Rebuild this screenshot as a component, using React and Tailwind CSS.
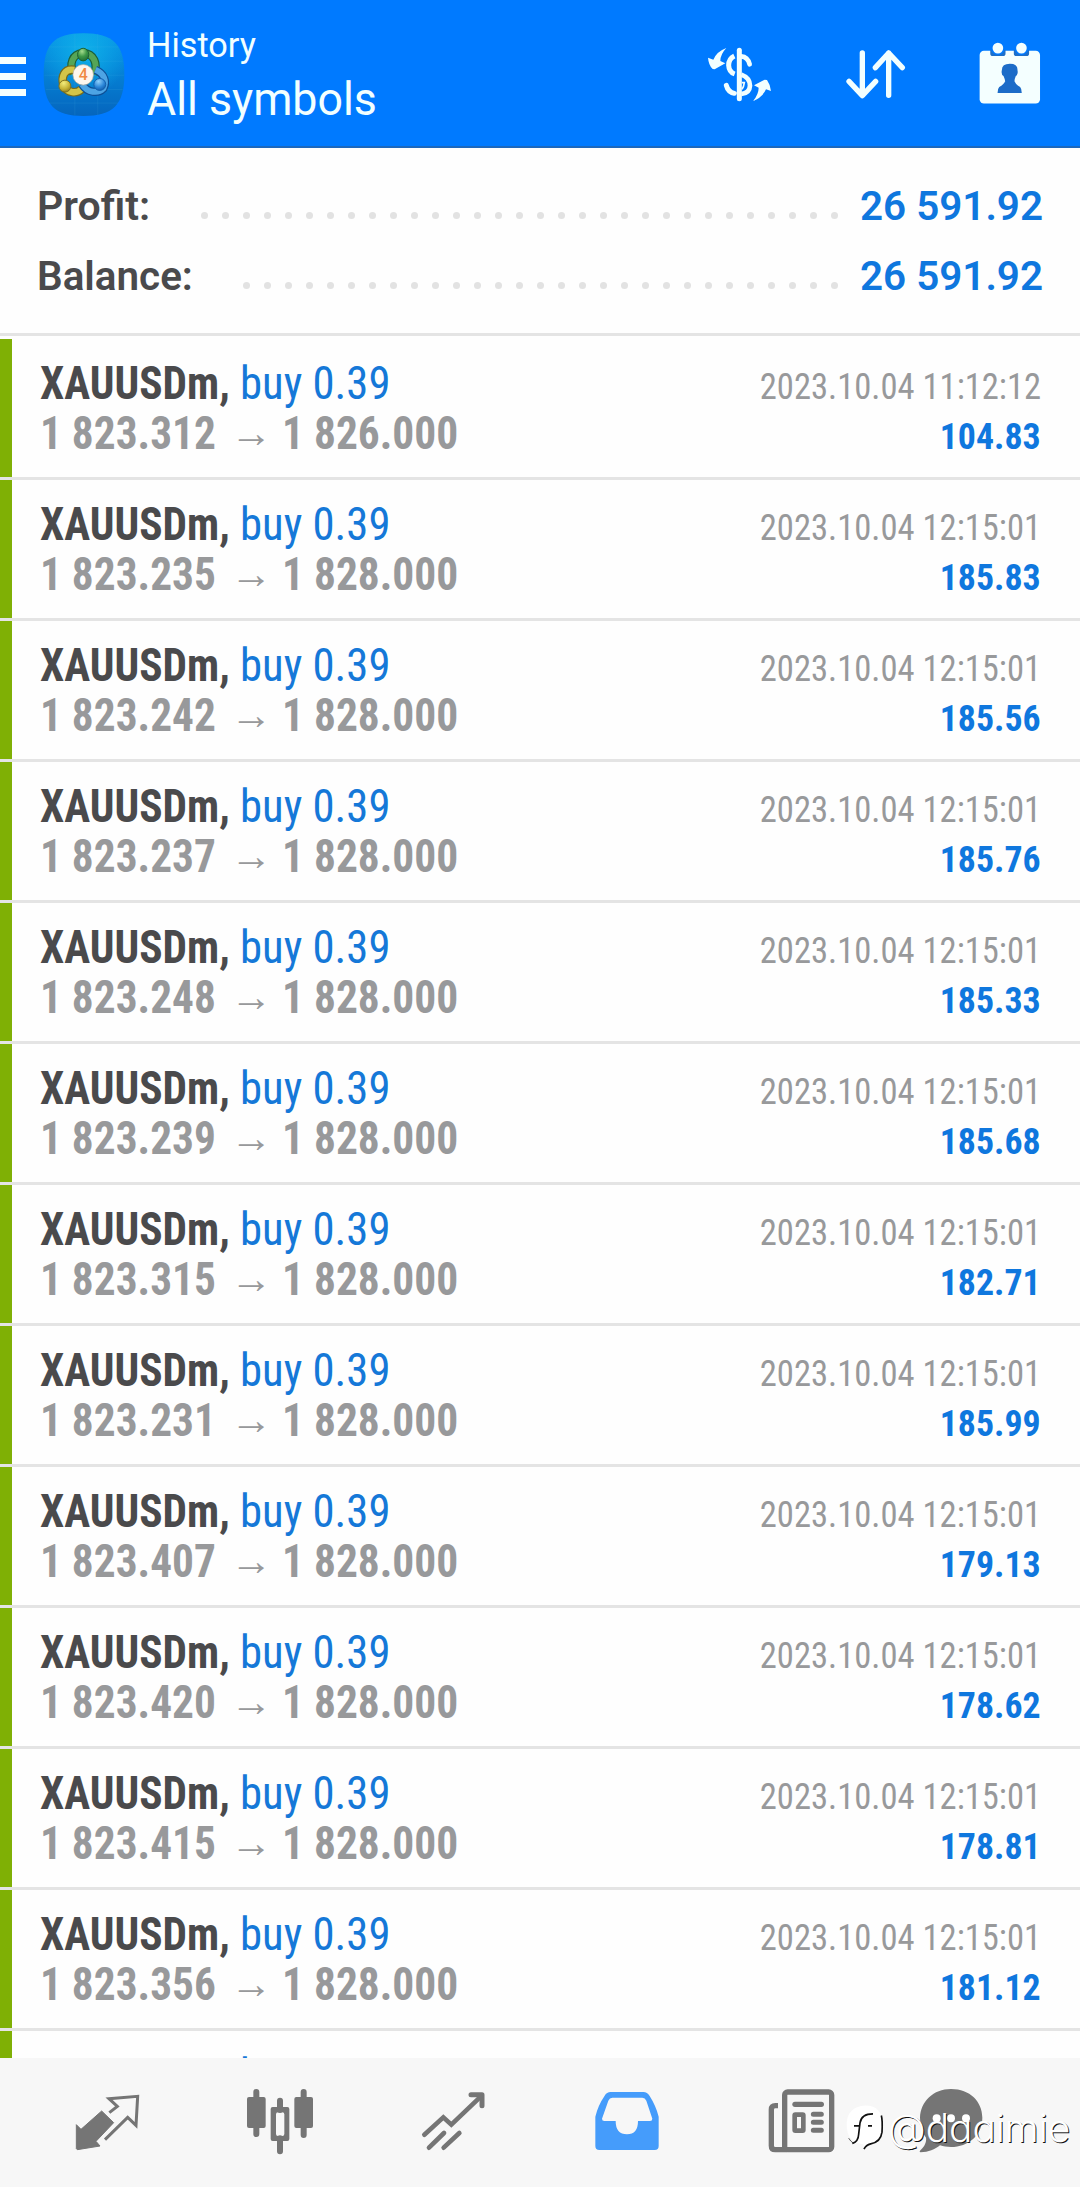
import React from "react";

const deals = [
  ["1 823.312", "1 826.000", "2023.10.04 11:12:12", "104.83"],
  ["1 823.235", "1 828.000", "2023.10.04 12:15:01", "185.83"],
  ["1 823.242", "1 828.000", "2023.10.04 12:15:01", "185.56"],
  ["1 823.237", "1 828.000", "2023.10.04 12:15:01", "185.76"],
  ["1 823.248", "1 828.000", "2023.10.04 12:15:01", "185.33"],
  ["1 823.239", "1 828.000", "2023.10.04 12:15:01", "185.68"],
  ["1 823.315", "1 828.000", "2023.10.04 12:15:01", "182.71"],
  ["1 823.231", "1 828.000", "2023.10.04 12:15:01", "185.99"],
  ["1 823.407", "1 828.000", "2023.10.04 12:15:01", "179.13"],
  ["1 823.420", "1 828.000", "2023.10.04 12:15:01", "178.62"],
  ["1 823.415", "1 828.000", "2023.10.04 12:15:01", "178.81"],
  ["1 823.356", "1 828.000", "2023.10.04 12:15:01", "181.12"],
];

function AppLogo() {
  return (
    <svg viewBox="40 34 250 256" className="h-[85px] w-[83px]">
      <defs>
        <linearGradient id="sky" x1="0" y1="0" x2="0" y2="1">
          <stop offset="0" stopColor="#0796e6" />
          <stop offset="0.4" stopColor="#0585d8" />
          <stop offset="1" stopColor="#0565bd" />
        </linearGradient>
        <radialGradient id="glow" cx="0.5" cy="0.22" r="0.55">
          <stop offset="0" stopColor="#10b4ea" stopOpacity="0.9" />
          <stop offset="1" stopColor="#10b4ea" stopOpacity="0" />
        </radialGradient>
        <radialGradient id="green" cx="0.4" cy="0.25" r="0.8">
          <stop offset="0" stopColor="#a5dc8d" />
          <stop offset="0.5" stopColor="#3f9a48" />
          <stop offset="1" stopColor="#1c6b35" />
        </radialGradient>
        <radialGradient id="gold" cx="0.4" cy="0.25" r="0.8">
          <stop offset="0" stopColor="#f3ec7c" />
          <stop offset="0.6" stopColor="#c7b437" />
          <stop offset="1" stopColor="#8e7c1c" />
        </radialGradient>
        <radialGradient id="azure" cx="0.4" cy="0.25" r="0.8">
          <stop offset="0" stopColor="#8fd0fb" />
          <stop offset="0.6" stopColor="#2b86d8" />
          <stop offset="1" stopColor="#0e58a8" />
        </radialGradient>
      </defs>
      <path d="M162 38C250 38 285 70 285 162S250 287 162 287 42 254 42 162 74 38 162 38Z" fill="url(#sky)" />
      <path d="M162 38C250 38 285 70 285 162S250 287 162 287 42 254 42 162 74 38 162 38Z" fill="url(#glow)" />
      <path d="M58 79H268M46 122H280M44 164H284M48 207H280M60 248H266M136 40V285M205 40V284" stroke="#5cc0f0" strokeOpacity="0.18" strokeWidth="2" />
      <path d="M132 160C118 130 128 100 160 97 194 98 206 130 194 162" fill="none" stroke="#1d5f36" strokeWidth="25" />
      <path d="M132 160C118 130 128 100 160 97 194 98 206 130 194 162" fill="none" stroke="#55a556" strokeWidth="18" />
      <path d="M134 148C104 142 94 170 102 194 114 220 142 220 156 206" fill="none" stroke="#756b1c" strokeWidth="26" />
      <path d="M134 148C104 142 94 170 102 194 114 220 142 220 156 206" fill="none" stroke="#d3c548" strokeWidth="19" />
      <path d="M198 148C226 160 232 184 222 204 206 220 174 218 158 192" fill="none" stroke="#0d4f96" strokeWidth="25" />
      <path d="M198 148C226 160 232 184 222 204 206 220 174 218 158 192" fill="none" stroke="#4da4e4" strokeWidth="18" />
      <ellipse cx="161" cy="102" rx="17" ry="19" fill="url(#green)" stroke="#1c6234" strokeWidth="3" />
      <circle cx="106" cy="197" r="18" fill="url(#gold)" stroke="#7c6f20" strokeWidth="3" />
      <circle cx="211" cy="192" r="18" fill="url(#azure)" stroke="#1260ae" strokeWidth="3" />
      <circle cx="161" cy="163" r="31" fill="#fdf6ee" stroke="#b3a999" strokeWidth="2" />
      <text x="161" y="180" textAnchor="middle" fill="#f08a45" className="font-['Roboto',sans-serif] text-[48px] font-medium">4</text>
    </svg>
  );
}

function Header() {
  return (
    <header className="flex h-[148px] items-start border-b-2 border-[#1c68bd] bg-[#007aff] text-[#f2ffff]">
      <div className="mt-[57px] flex w-[26px] flex-col gap-[9px]">
        <i className="h-[7px] bg-[#f4ffff]" />
        <i className="h-[7px] bg-[#f4ffff]" />
        <i className="h-[7px] bg-[#f4ffff]" />
      </div>
      <div className="mt-[32px] ml-[17px]">
        <AppLogo />
      </div>
      <div className="mt-[25px] ml-[21px] w-[553px]">
        <div className="h-[40px] text-[34.5px] leading-[40px]">
          <span className="inline-block origin-left scale-x-[0.993] whitespace-nowrap">History</span>
        </div>
        <div className="mt-[8px] h-[54px] text-[45.5px] leading-[54px]">
          <span className="inline-block origin-left scale-x-[0.982] whitespace-nowrap">All symbols</span>
        </div>
      </div>
      <svg viewBox="60 120 240 210" className="mt-[40px] h-[70px] w-[80px]" fill="none" stroke="#f2ffff">
        <path d="M178 151V296" strokeWidth="15" strokeLinecap="round" />
        <path d="M163 168Q146 176 146 196 147 216 164 222" strokeWidth="15" />
        <path d="M184 169Q203 170 209 193" strokeWidth="14" strokeLinecap="round" />
        <path d="M184 224Q210 234 210 257 209 280 184 282" strokeWidth="14" />
        <path d="M186 248H193Q191 262 186 268" strokeWidth="5" />
        <path d="M139 256Q144 276 163 280" strokeWidth="15" strokeLinecap="round" />
        <path d="M84 173 100 179Q111 154 139 144 121 163 121 183L136 190 104 208 98 207Q86 196 84 173Z" fill="#f2ffff" stroke="none" />
        <path d="M273 273 258 268Q248 292 219 303 236 283 236 263L222 256 254 239 261 240Q271 254 273 273Z" fill="#f2ffff" stroke="none" />
      </svg>
      <svg viewBox="480 120 210 210" className="mt-[40px] ml-[60px] h-[70px] w-[70px]" fill="none" stroke="#f2ffff" strokeWidth="16" strokeLinecap="round" strokeLinejoin="round">
        <path d="M547 159V286M507 244 547 287 587 244M626 286V159M586 203 626 159 667 203" />
      </svg>
      <svg viewBox="880 120 220 210" className="mt-[40px] ml-[63px] h-[70px] w-[73px]">
        <rect x="900" y="152" width="182" height="159" rx="13" fill="#f4ffff" />
        <path d="M932 150H978V160Q978 168 970 168H940Q932 168 932 160ZM1003 150H1049V160Q1049 168 1041 168H1011Q1003 168 1003 160Z" fill="#1d6fc9" />
        <circle cx="955" cy="144" r="21" fill="#007aff" />
        <circle cx="1026" cy="144" r="21" fill="#007aff" />
        <circle cx="955" cy="144" r="16" fill="#f4ffff" />
        <circle cx="1026" cy="144" r="16" fill="#f4ffff" />
        <path d="M991 191Q1015 191 1014 210 1017 224 1009 228 1005 237 1005 244 1009 254 1022 261 1027 266 1027 279H954Q954 266 959 261 973 254 977 244 976 237 972 228 964 224 967 210 967 191 991 191Z" fill="#1c6cc8" />
      </svg>
    </header>
  );
}

function Summary({ label, value, dots, className }) {
  return (
    <div className="flex h-[70px] items-baseline justify-between pr-[36px] pl-[37px] text-[41px] leading-[70px] font-semibold">
      <span className={className}>{label}</span>
      <span className="flex items-baseline">
        <span className="mr-[22px] flex -translate-y-px gap-[14px]">
          {Array.from({ length: dots }, (_, i) => (
            <i key={i} className="size-[7px] rounded-full bg-[#e2e2e2]" />
          ))}
        </span>
        <span className="inline-block w-[184px] origin-left scale-x-[0.985] whitespace-nowrap text-[#0f77de]">{value}</span>
      </span>
    </div>
  );
}

function Deal({ open, close, time, profit }) {
  return (
    <div className="flex h-[141px] shrink-0 border-b-[3px] border-[#e4e4e4] font-stretch-condensed">
      <i className="w-[12px] bg-[#7fb005]" />
      <div className="flex-1 pt-[20px] pr-[39px] pl-[28px] text-[45.5px] leading-[50px]">
        <div className="flex h-[50px] items-baseline whitespace-nowrap">
          <span className="inline-block w-[200px] origin-left scale-x-[0.952] font-bold text-[#4a4a4c]">XAUUSDm,</span>
          <span className="inline-block w-[150px] origin-left scale-x-[0.982] text-[#1578d8]">buy 0.39</span>
          {time && <span className="ml-auto inline-block origin-right scale-x-[0.922] text-[37.5px] text-[#98999b]">{time}</span>}
        </div>
        {open && (
          <div className="flex h-[50px] items-baseline font-bold whitespace-nowrap text-[#98999b]">
            <span className="inline-block w-[190px] origin-left scale-x-[0.952]">{open}</span>
            <span className="inline-block w-[52px] -translate-y-[2px] text-[42px] font-normal">→</span>
            <span className="inline-block origin-left scale-x-[0.954]">{close}</span>
            <span className="ml-auto inline-block origin-right scale-x-[0.955] text-[37.5px] text-[#0f77de]">{profit}</span>
          </div>
        )}
      </div>
    </div>
  );
}

function TabBar() {
  return (
    <nav className="relative flex h-[129px] bg-[#f7f7f7] pl-[21px]">
      <svg viewBox="63 174 519 387" className="h-[129px] w-[173px] shrink-0" fill="none" stroke="#757575">
        <path d="M305 333 341 368 288 424 300 438 232 449 229 446V374L243 388Z" fill="#757575" strokeWidth="3" strokeLinejoin="round" />
        <path d="M328 338 352 319 327 296 413 289 408 376 383 352 315 419" strokeWidth="9" />
      </svg>
      <svg viewBox="582 174 519 387" className="h-[129px] w-[173px] shrink-0" fill="none" stroke="#757575">
        <path d="M769 276V402M911 276V405M840 302V330M840 415V454" strokeWidth="18" strokeLinecap="round" />
        <rect x="741" y="291" width="56" height="93" rx="6" fill="#757575" stroke="none" />
        <rect x="883" y="291" width="56" height="93" rx="6" fill="#757575" stroke="none" />
        <path fillRule="evenodd" d="M818 321H862Q868 321 868 327V417Q868 423 862 423H818Q812 423 812 417V327Q812 321 818 321ZM834 337Q828 337 828 343V402Q828 408 834 408H847Q853 408 853 402V343Q853 337 847 337Z" fill="#757575" stroke="none" />
      </svg>
      <svg viewBox="21 174 519 387" className="h-[129px] w-[173px] shrink-0" fill="none" stroke="#757575" strokeWidth="14" strokeLinecap="round">
        <path d="M193 404 250 352 274 374 362 290M207 443 252 399M251 443 298 399" />
        <path d="M333 284H366V317" strokeWidth="15" strokeLinejoin="round" />
      </svg>
      <svg viewBox="540 174 519 387" className="h-[129px] w-[173px] shrink-0">
        <path fillRule="evenodd" d="M752 276H850Q862 276 869 288 888 318 896 350V438Q896 450 884 450H718Q706 450 706 438V350Q714 316 734 287 740 276 752 276ZM757 293Q749 293 745 302L726 356Q726 363 733 363H767Q767 403 801 403 834 403 834 363H870Q877 363 877 356L859 302Q855 293 847 293Z" fill="#459cfb" />
      </svg>
      <svg viewBox="-21 174 519 387" className="h-[129px] w-[173px] shrink-0" fill="none" stroke="#757575" strokeWidth="16">
        <rect x="194" y="276" width="141" height="173" rx="9" />
        <path d="M174 317H166Q154 317 154 329V437Q154 449 166 449H200" />
        <path d="M225 313H304" strokeLinecap="round" />
        <path d="M280 343H304M280 367H304M280 391H304" strokeWidth="15" strokeLinecap="round" />
        <rect x="224" y="344" width="26" height="48" rx="2" strokeWidth="14" />
      </svg>
      <svg viewBox="498 174 519 387" className="h-[129px] w-[173px] shrink-0">
        <path d="M693 267C750 267 787 305 787 353 787 405 745 441 693 441 681 441 670 440 660 436 645 449 625 456 602 457 597 457 599 453 602 450 615 438 620 424 618 413 606 397 600 376 600 353 602 304 640 267 693 267Z" fill="#757575" />
        <circle cx="650" cy="355" r="12" fill="#fff" />
        <circle cx="693" cy="355" r="12" fill="#fff" />
        <circle cx="738" cy="355" r="12" fill="#fff" />
      </svg>
      <div className="absolute top-[46px] left-[846px] flex items-center">
        <svg viewBox="378 318 114 140" className="h-[47px] w-[38px]">
          <path d="M436 322Q488 322 488 380 488 430 448 438L433 455 430 438Q380 434 380 380 380 326 436 322Z" fill="#fff" />
          <path d="M397 436Q415 430 416 408L420 374Q424 347 459 347M402 383H418M444 383H456M484 352Q488 366 486 402 482 432 452 437 438 440 432 453" fill="none" stroke="#111" strokeWidth="5" />
          <path d="M386 420Q392 430 400 435" fill="none" stroke="#111" strokeWidth="2" />
        </svg>
        <span className="ml-[4px] inline-block font-['Inter',sans-serif] text-[38.8px] leading-[47px] font-light whitespace-nowrap text-white [font-feature-settings:'cv11'] [text-shadow:1px_1px_0_#111]">@daaimie</span>
      </div>
    </nav>
  );
}

export default function App() {
  return (
    <main className="flex h-[2187px] w-[1080px] flex-col overflow-hidden bg-[#fefefe] font-['Roboto',sans-serif]">
      <Header />
      <section className="h-[188px] border-b-[3px] border-[#e4e4e4] pt-[23px]">
        <Summary label="Profit:" value="26 591.92" dots={31} className="inline-block w-[120px] origin-left whitespace-nowrap text-[#4a4a4c]" />
        <Summary label="Balance:" value="26 591.92" dots={29} className="inline-block w-[160px] origin-left scale-x-[0.985] whitespace-nowrap text-[#4a4a4c]" />
      </section>
      <section className="flex h-[1722px] flex-col overflow-hidden pt-[3px]">
        {deals.map(([open, close, time, profit]) => (
          <Deal key={open} open={open} close={close} time={time} profit={profit} />
        ))}
        <Deal />
      </section>
      <TabBar />
    </main>
  );
}
